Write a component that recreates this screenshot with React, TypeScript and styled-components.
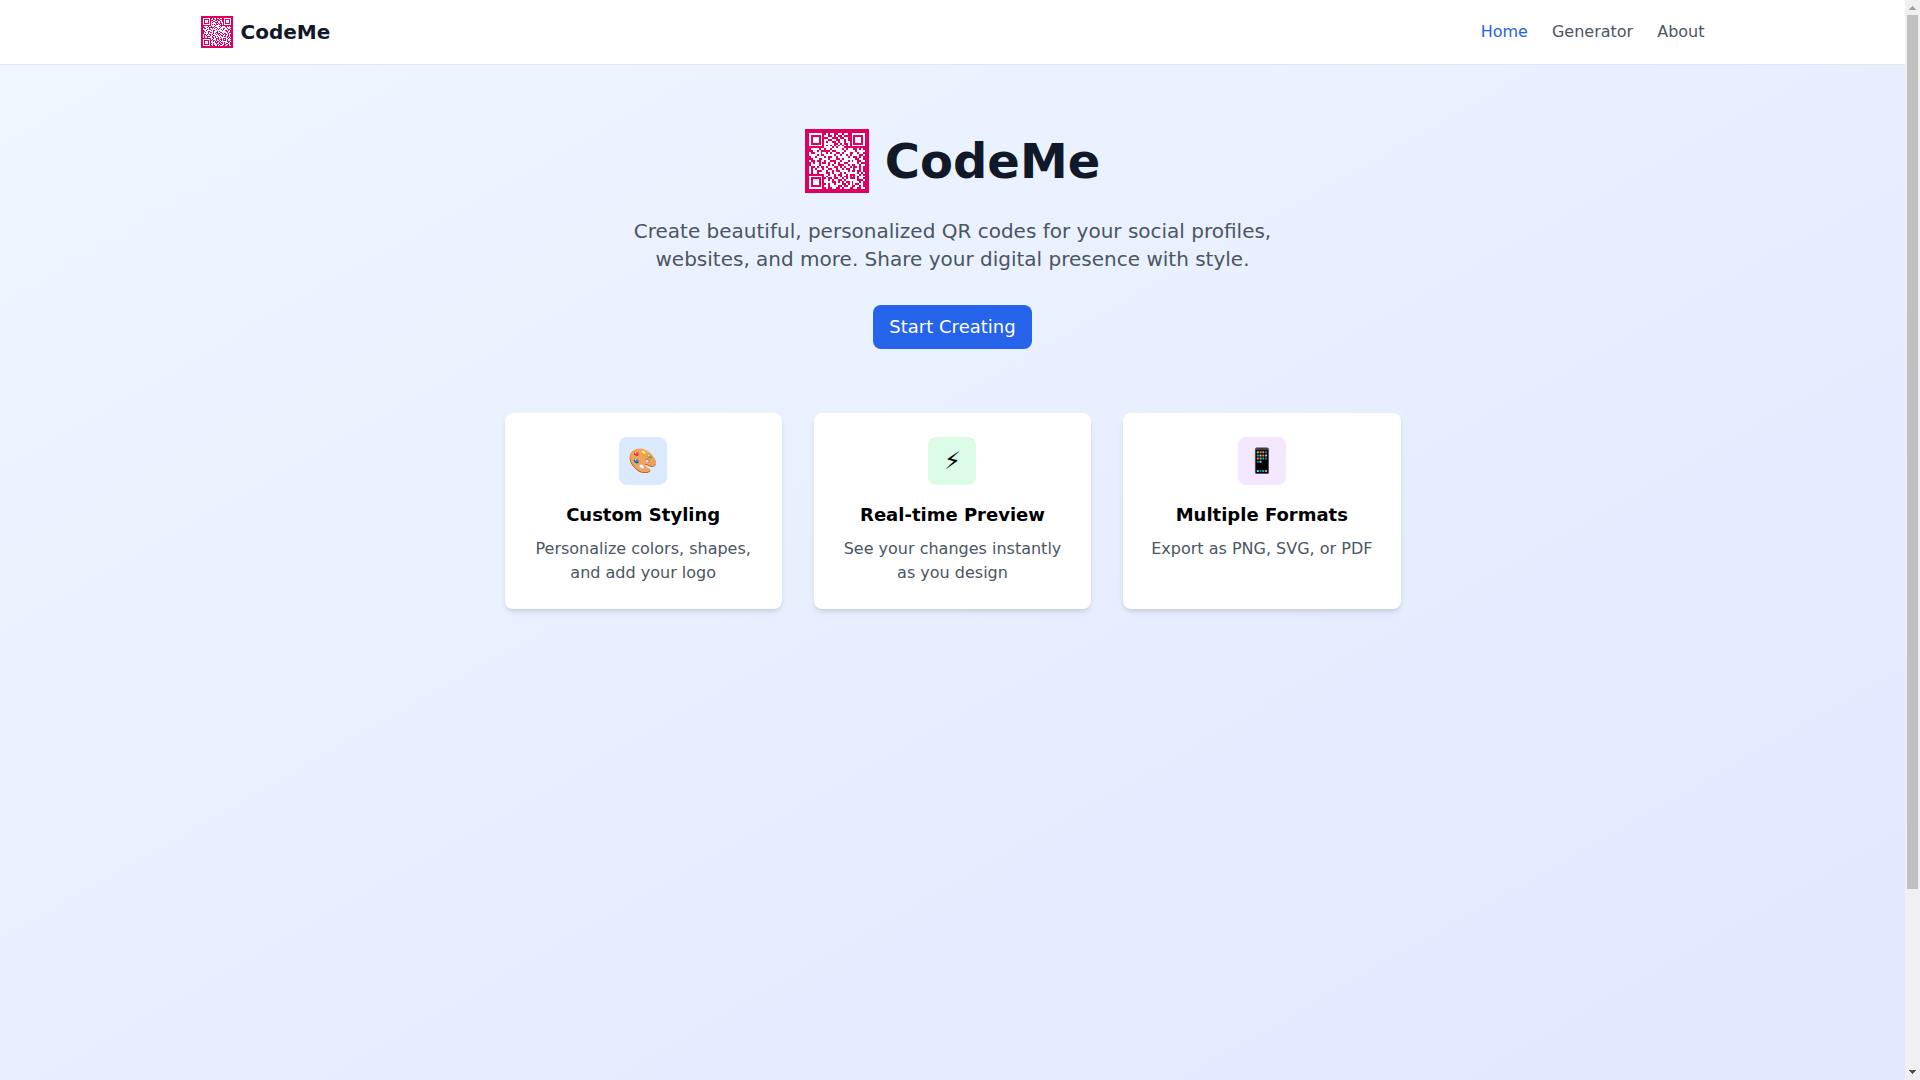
import React from "react";
import styled, { createGlobalStyle } from "styled-components";

const GlobalStyle = createGlobalStyle`
  *, *::before, *::after { box-sizing: border-box; }
  body { margin: 0; font-family: "DejaVu Sans", "Noto Sans", sans-serif; font-size: 16px; line-height: 24px; color: #000; background: #fff; }
  h1, h2, p { margin: 0; }
  a { color: inherit; text-decoration: none; }
`;

const Shell = styled.div`
  display: grid;
  grid-template-columns: minmax(0, 1fr) 15px;
  height: 100vh;
  overflow: hidden;
`;

const Page = styled.div`
  overflow: hidden;
`;

const Header = styled.header`
  background: #fff;
  border-bottom: 1px solid #e5e7eb;
`;

const HeaderInner = styled.div`
  display: flex;
  align-items: center;
  justify-content: space-between;
  max-width: 1536px;
  margin: 0 auto;
  padding: 16px;
`;

const Brand = styled.a`
  display: flex;
  align-items: center;
  gap: 8px;
  font-size: 20px;
  line-height: 28px;
  font-weight: 700;
  color: #111827;
`;

const Nav = styled.nav`
  display: flex;
  gap: 24px;
`;

const NavLink = styled.a<{ $active?: boolean }>`
  color: ${(p) => (p.$active ? "#2563eb" : "#4b5563")};
`;

const Main = styled.main`
  min-height: 100vh;
  padding: 64px 16px;
  background: linear-gradient(to bottom right, #eff6ff, #e0e7ff);
`;

const Hero = styled.section`
  display: flex;
  flex-direction: column;
  align-items: center;
  text-align: center;
`;

const Title = styled.div`
  display: flex;
  align-items: center;
  gap: 16px;
  margin-bottom: 24px;
`;

const Heading = styled.h1`
  font-size: 48px;
  line-height: 48px;
  font-weight: 700;
  color: #111827;
`;

const Lead = styled.p`
  max-width: 672px;
  margin-bottom: 32px;
  font-size: 20px;
  line-height: 28px;
  color: #4b5563;
`;

const StartButton = styled.button`
  padding: 8px 16px;
  border: 0;
  border-radius: 8px;
  background: #2563eb;
  color: #fff;
  font-family: inherit;
  font-size: 18px;
  line-height: 28px;
  cursor: pointer;
`;

const Features = styled.section`
  display: grid;
  grid-template-columns: repeat(3, minmax(0, 1fr));
  gap: 32px;
  max-width: 896px;
  margin: 64px auto 0;
`;

const Card = styled.article`
  padding: 24px;
  border-radius: 8px;
  background: #fff;
  text-align: center;
  box-shadow: 0 4px 6px -1px rgba(0, 0, 0, 0.1), 0 2px 4px -2px rgba(0, 0, 0, 0.1);
`;

const Badge = styled.div<{ $tint: string }>`
  display: flex;
  align-items: center;
  justify-content: center;
  width: 48px;
  height: 48px;
  margin: 0 auto 16px;
  border-radius: 8px;
  background: ${(p) => p.$tint};
  font-size: 24px;
  line-height: 32px;
`;

const CardTitle = styled.h2`
  margin-bottom: 8px;
  font-size: 18px;
  line-height: 28px;
  font-weight: 600;
`;

const CardText = styled.p`
  color: #4b5563;
`;

const Track = styled.div`
  display: grid;
  grid-template-rows: 15px minmax(0, 1fr) 15px;
  background: #f0f0f0;
`;

const Thumb = styled.div`
  width: 11px;
  height: 83.25%;
  margin: 0 auto;
  background: #c0c0c0;
`;

const Arrow = styled.svg`
  display: block;
  width: 15px;
  height: 15px;
`;

const LogoSvg = styled.svg<{ $size: number }>`
  display: block;
  flex: none;
  width: ${(p) => p.$size}px;
  height: ${(p) => p.$size}px;
`;

const MODULES = [
  "#######..#.##..##.##..#######",
  "#.....#.##..#.#..#....#.....#",
  "#.###.#...##...#..##..#.###.#",
  "#.###.#.##..##..##.#..#.###.#",
  "#.###.#.#.##..#.##.##.#.###.#",
  "#.....#.#####..#.#..#.#.....#",
  "#######.#.#.#.#.#.#.#.#######",
  "........####.#.###...........",
  ".####.##.##.#####.#.###..#.#.",
  "..##.#.....#..####.#####.####",
  "#..###.##.#.##..#.###..##.##.",
  "####.#..#####.##.##.#.####..#",
  ".##.####.#..##.#####.##..#.#.",
  "..###..###.###..#.######..##.",
  "#..#..##.##...##.###.#.##..##",
  ".#.##.#..#.##.#.##..#####.#..",
  ".####.####.#.##...##.#..##.##",
  "#..#.#..#.###..#.#.##.#..#.#.",
  "#.#.###.##..##.##.#..##.##.#.",
  "#.##...##.##.#..####.#..#..#.",
  "#.##.####..#.###.#.######.#.#",
  "........##.##.#..##.#...##.#.",
  "#######.#.###.##.#..#.#.#.###",
  "#.....#..#..#..##.#.#...#.##.",
  "#.###.#.##.#.##..#.######...#",
  "#.###.#.####..#.#.#..#.###.#.",
  "#.###.#..#.##.###..#.#.#..##.",
  "#.....#.##.####..#..##..##.#.",
  "#######..#..##..#.###..##..##",
];

const MODULE_PATH = MODULES.map((row, y) =>
  [...row].map((cell, x) => (cell === "#" ? `M${x + 2} ${y + 2}h1v1h-1z` : "")).join("")
).join("");

const QrLogo = ({ size }: { size: number }) => (
  <LogoSvg $size={size} viewBox="0 0 33 33" shapeRendering="crispEdges" aria-hidden="true">
    <path fill="#df0060" d="M0 0h33v33H0z" />
    <path fill="#fff" d={MODULE_PATH} />
  </LogoSvg>
);

const FEATURES = [
  { icon: "🎨", tint: "#dbeafe", title: "Custom Styling", text: "Personalize colors, shapes, and add your logo" },
  { icon: "⚡", tint: "#dcfce7", title: "Real-time Preview", text: "See your changes instantly as you design" },
  { icon: "📱", tint: "#f3e8ff", title: "Multiple Formats", text: "Export as PNG, SVG, or PDF" },
];

export default function App() {
  return (
    <>
      <GlobalStyle />
      <Shell>
        <Page>
          <Header>
            <HeaderInner>
              <Brand href="#home">
                <QrLogo size={32} />
                <span>CodeMe</span>
              </Brand>
              <Nav aria-label="Main">
                <NavLink href="#home" $active>Home</NavLink>
                <NavLink href="#generator">Generator</NavLink>
                <NavLink href="#about">About</NavLink>
              </Nav>
            </HeaderInner>
          </Header>
          <Main>
            <Hero>
              <Title>
                <QrLogo size={64} />
                <Heading>CodeMe</Heading>
              </Title>
              <Lead>
                Create beautiful, personalized QR codes for your social profiles, websites, and more. Share your
                digital presence with style.
              </Lead>
              <StartButton type="button">Start Creating</StartButton>
            </Hero>
            <Features>
              {FEATURES.map((f) => (
                <Card key={f.title}>
                  <Badge $tint={f.tint}>{f.icon}</Badge>
                  <CardTitle>{f.title}</CardTitle>
                  <CardText>{f.text}</CardText>
                </Card>
              ))}
            </Features>
          </Main>
        </Page>
        <Track aria-hidden="true">
          <Arrow viewBox="0 0 15 15" shapeRendering="crispEdges">
            <path fill="#a0a0a0" d="M7 6h1v1h1v1h1v1h1v1H4V9h1V8h1V7h1z" />
          </Arrow>
          <Thumb />
          <Arrow viewBox="0 0 15 15" shapeRendering="crispEdges">
            <path fill="#505050" d="M4 5h7v1h-1v1H9v1H8v1H7V8H6V7H5V6H4z" />
          </Arrow>
        </Track>
      </Shell>
    </>
  );
}
